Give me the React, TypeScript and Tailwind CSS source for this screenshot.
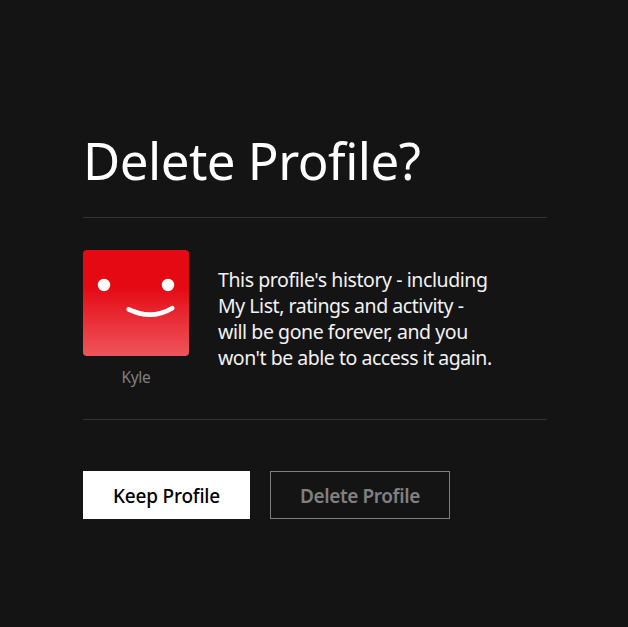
const lines = [
  { text: "This profile's history - including", spacing: "tracking-[-0.42px]" },
  { text: "My List, ratings and activity -", spacing: "tracking-[-0.45px]" },
  { text: "will be gone forever, and you", spacing: "tracking-[-0.43px]" },
  { text: "won't be able to access it again.", spacing: "tracking-[-0.47px]" },
];

function Avatar() {
  return (
    <svg className="block size-[106px] rounded" viewBox="0 0 106 106" aria-hidden="true">
      <defs>
        <linearGradient id="face" x1="0" y1="0" x2="0" y2="1">
          <stop offset="0" stopColor="#e50914" />
          <stop offset="0.35" stopColor="#e50914" />
          <stop offset="1" stopColor="#ee555d" />
        </linearGradient>
      </defs>
      <rect width="106" height="106" fill="url(#face)" />
      <circle cx="21" cy="35" r="6.2" fill="#fff" />
      <circle cx="85" cy="35" r="6.2" fill="#fff" />
      <path d="M45.7 59.4Q68.5 70.5 89.2 58.2" fill="none" stroke="#fff" strokeWidth="4.7" strokeLinecap="round" />
    </svg>
  );
}

export default function App() {
  return (
    <main className="h-[627px] w-[628px] overflow-hidden bg-[#141414] pt-[125px] pl-[83px] font-['Noto_Sans',sans-serif] text-white">
      <div className="w-[464px]">
        <h1 className="h-[92px] text-[51px] leading-[70px] font-normal whitespace-nowrap tracking-[-0.5px]">
          Delete Profile?
        </h1>
        <section className="flex h-[203px] border-y border-[#333] pt-8">
          <div className="w-[106px]">
            <Avatar />
            <p className="mt-[9px] text-center text-[15.5px] leading-6 tracking-[-0.3px] text-[#808080]">Kyle</p>
          </div>
          <div className="ml-[29px] pt-[17px] text-[19.5px] leading-[26px] whitespace-nowrap text-[#f2f2f2]">
            {lines.map((line) => (
              <p key={line.text}>
                <span className={line.spacing}>{line.text}</span>
              </p>
            ))}
          </div>
        </section>
        <div className="mt-[51px] flex gap-5">
          <button className="h-12 w-[167px] bg-white pt-0.5 text-[19px] font-medium whitespace-nowrap tracking-[-0.2px] text-black">
            Keep Profile
          </button>
          <button className="h-12 w-[180px] border border-[#808080] pt-0.5 text-[19px] font-semibold whitespace-nowrap tracking-[-0.4px] text-[#808080]">
            Delete Profile
          </button>
        </div>
      </div>
    </main>
  );
}
